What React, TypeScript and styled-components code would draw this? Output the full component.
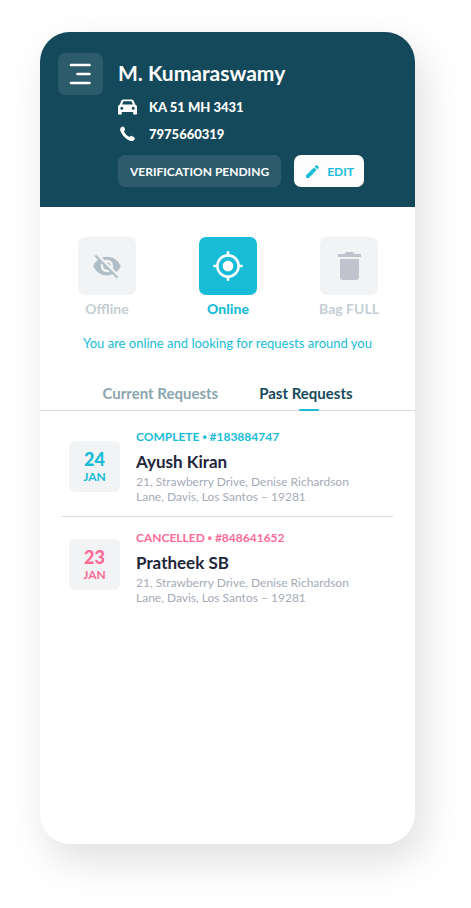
import React from "react";
import styled, { createGlobalStyle, css } from "styled-components";
import { MdVisibilityOff, MdGpsFixed, MdEdit } from "react-icons/md";

const navy = "#14495b";
const cyan = "#19bcd7";
const pink = "#fd6c98";
const tile = "#f1f3f5";

const GlobalStyle = createGlobalStyle`
  * { box-sizing: border-box; }
  body { margin: 0; background: #fff; font-family: Lato, "Open Sans", sans-serif; }
  button { font: inherit; border: 0; padding: 0; background: none; cursor: pointer; }
  h1, h2, p, ul { margin: 0; padding: 0; }
`;

const Page = styled.div`
  min-height: 100vh;
  padding: 32px 56px 64px 40px;
  display: flex;
`;

const Card = styled.main`
  flex: 1;
  min-width: 0;
  border-radius: 30px;
  overflow: hidden;
  background: #fff;
  box-shadow: 8px 16px 40px rgba(0, 0, 0, 0.13);
`;

const Header = styled.header`
  display: flex;
  gap: 15px;
  padding: 21px 18px 20px;
  background: ${navy};
  color: #fff;
`;

const MenuButton = styled.button`
  width: 45px;
  height: 42px;
  flex: none;
  border-radius: 7px;
  background: #2c5b6b;
  display: grid;
  place-items: center;
`;

const Profile = styled.div`
  flex: 1;
  min-width: 0;
`;

const Name = styled.h1`
  font-size: 21px;
  font-weight: 700;
  line-height: 40px;
`;

const Detail = styled.p`
  display: grid;
  grid-template-columns: 20px 1fr;
  column-gap: 11px;
  align-items: center;
  height: 27px;
  font-size: 13px;
  font-weight: 900;
`;

const Actions = styled.div`
  display: flex;
  gap: 13px;
  margin-top: 8px;
`;

const Action = styled.button<{ $light?: boolean }>`
  height: 32px;
  display: flex;
  align-items: center;
  justify-content: center;
  gap: 6px;
  padding: 0 ${(p) => (p.$light ? 10 : 12)}px;
  border-radius: 7px;
  font-size: 12px;
  font-weight: 700;
  white-space: nowrap;
  background: ${(p) => (p.$light ? "#fdfdfd" : "#2c5b6b")};
  color: ${(p) => (p.$light ? cyan : "#fff")};
`;

const Modes = styled.div`
  display: flex;
  justify-content: space-between;
  padding: 30px 27px 0 28px;
`;

const Mode = styled.button<{ $active?: boolean }>`
  width: 78px;
  display: flex;
  flex-direction: column;
  align-items: center;
  gap: 4px;
  font-size: 14px;
  line-height: 20px;
  font-weight: ${(p) => (p.$active ? 900 : 700)};
  color: ${(p) => (p.$active ? cyan : "#c3ced5")};
`;

const ModeTile = styled.span<{ $active?: boolean; $ink: string }>`
  width: 58px;
  height: 58px;
  border-radius: 7px;
  display: grid;
  place-items: center;
  background: ${(p) => (p.$active ? cyan : tile)};
  color: ${(p) => p.$ink};
`;

const Status = styled.p`
  margin-top: 15px;
  text-align: center;
  font-size: 13px;
  line-height: 18px;
  color: ${cyan};
`;

const Tabs = styled.div`
  display: flex;
  justify-content: center;
  gap: 41px;
  margin-top: 24px;
  border-bottom: 1px solid #d8dbde;
`;

const Tab = styled.button<{ $active?: boolean }>`
  position: relative;
  height: 34px;
  font-size: 15px;
  font-weight: 700;
  color: ${(p) => (p.$active ? navy : "#8ba5af")};
  ${(p) =>
    p.$active &&
    css`
      &::after {
        content: "";
        position: absolute;
        left: 50%;
        bottom: -1px;
        width: 20px;
        height: 2px;
        margin-left: -7px;
        border-radius: 1px;
        background: ${cyan};
      }
    `}
`;

const DateTile = styled.time<{ $ink: string }>`
  width: 51px;
  height: 51px;
  margin-top: 13px;
  flex: none;
  border-radius: 6px;
  background: ${tile};
  color: ${(p) => p.$ink};
  display: flex;
  flex-direction: column;
  align-items: center;
  justify-content: center;
  font-size: 12px;
  line-height: 16px;
  font-weight: 700;
`;

const Requests = styled.ul`
  list-style: none;
  padding: 0 22px;
`;

const Request = styled.li`
  display: flex;
  align-items: flex-start;
  gap: 16px;
  padding: 17px 7px 12px;
  & + & {
    border-top: 1px solid #d9dce3;
    padding-top: 12px;
  }
  & + & ${DateTile} {
    margin-top: 10px;
  }
`;

const Day = styled.span`
  font-size: 18px;
  line-height: 20px;
  font-weight: 900;
`;

const State = styled.p<{ $ink: string }>`
  font-size: 12px;
  line-height: 18px;
  font-weight: 700;
  color: ${(p) => p.$ink};
`;

const Bullet = styled.span`
  font-family: "Liberation Sans", sans-serif;
`;

const Customer = styled.h2`
  margin-top: 4px;
  font-size: 17px;
  line-height: 24px;
  font-weight: 700;
  color: #22263a;
`;

const Address = styled.p`
  font-size: 12px;
  line-height: 15px;
  color: #a5abb8;
`;

const CarIcon = () => (
  <svg width="19" height="16" viewBox="0 0 19 16" fill="currentColor" aria-hidden="true">
    <path
      fillRule="evenodd"
      d="M5.6.5h7.8c1.200 0 2 .5 2.400 1.500L17.200 5.600c1.200.5 1.800 1.400 1.800 2.700v6.100c0 .7-.4 1.100-1.100 1.100h-1.600c-.7 0-1.100-.4-1.100-1.100V13H3.800v1.400c0 .7-.4 1.100-1.100 1.100H1.100C.4 15.500 0 15.100 0 14.400V8.300c0-1.300.6-2.200 1.800-2.700L3.200 2C3.600 1 4.400.5 5.600.5Zm.5 1.700c-.5 0-.8.2-1 .6L4.200 5.400h10.600l-.9-2.600c-.2-.4-.5-.6-1-.6H6.100ZM3.800 7.700a1.500 1.500 0 1 0 0 3 1.500 1.500 0 0 0 0-3Zm11.400 0a1.500 1.500 0 1 0 0 3 1.500 1.500 0 0 0 0-3Z"
    />
  </svg>
);

const PhoneIcon = () => (
  <svg width="19" height="16" viewBox="0 0 19 16" fill="currentColor" aria-hidden="true">
    <path d="M2.200 2.600Q3.200.4 5 .5Q6.200.6 7 3Q7.200 4.300 5.900 5.400Q7.600 9.100 11.500 10.900Q12.600 9.700 13.800 9.900Q16.200 10.800 16.900 12.300Q17 13.900 14.900 14.900Q11.300 16 6.400 11.100Q1.700 6.200 2.200 2.600Z" />
  </svg>
);

const BinIcon = () => (
  <svg width="23" height="28" viewBox="0 0 23 28" fill="currentColor" aria-hidden="true">
    <path d="M0 2h6l2-2h7l2 2h6v3H0Z" />
    <path d="M2 7h19v18a3 3 0 0 1-3 3H5a3 3 0 0 1-3-3Z" />
  </svg>
);

const requests = [
  { day: "24", date: "01-24", state: "COMPLETE", id: "#183884747", name: "Ayush Kiran", ink: cyan },
  { day: "23", date: "01-23", state: "CANCELLED", id: "#848641652", name: "Pratheek SB", ink: pink },
];

export default function App() {
  return (
    <>
      <GlobalStyle />
      <Page>
        <Card>
          <Header>
            <MenuButton aria-label="Menu">
              <svg width="23" height="22" viewBox="0 0 23 22" stroke="#fff" strokeWidth="2.6" strokeLinecap="round">
                <path d="M2 2h18.500M8.500 11h12M2 20h18.500" />
              </svg>
            </MenuButton>
            <Profile>
              <Name>M. Kumaraswamy</Name>
              <Detail><CarIcon />KA 51 MH 3431</Detail>
              <Detail><PhoneIcon />7975660319</Detail>
              <Actions>
                <Action>VERIFICATION PENDING</Action>
                <Action $light><MdEdit size={17} />EDIT</Action>
              </Actions>
            </Profile>
          </Header>
          <Modes>
            <Mode><ModeTile $ink="#b0bec7"><MdVisibilityOff size={30} /></ModeTile>Offline</Mode>
            <Mode $active><ModeTile $active $ink="#fff"><MdGpsFixed size={32} /></ModeTile>Online</Mode>
            <Mode><ModeTile $ink="#c0c3cd"><BinIcon /></ModeTile>Bag FULL</Mode>
          </Modes>
          <Status>You are online and looking for requests around you</Status>
          <Tabs role="tablist">
            <Tab role="tab" aria-selected={false}>Current Requests</Tab>
            <Tab role="tab" aria-selected $active>Past Requests</Tab>
          </Tabs>
          <Requests>
            {requests.map((r) => (
              <Request key={r.id}>
                <DateTile dateTime={r.date} $ink={r.ink}><Day>{r.day}</Day>JAN</DateTile>
                <div>
                  <State $ink={r.ink}>{r.state} <Bullet>•</Bullet> {r.id}</State>
                  <Customer>{r.name}</Customer>
                  <Address>21, Strawberry Drive, Denise Richardson<br />Lane, Davis, Los Santos – 19281</Address>
                </div>
              </Request>
            ))}
          </Requests>
        </Card>
      </Page>
    </>
  );
}
